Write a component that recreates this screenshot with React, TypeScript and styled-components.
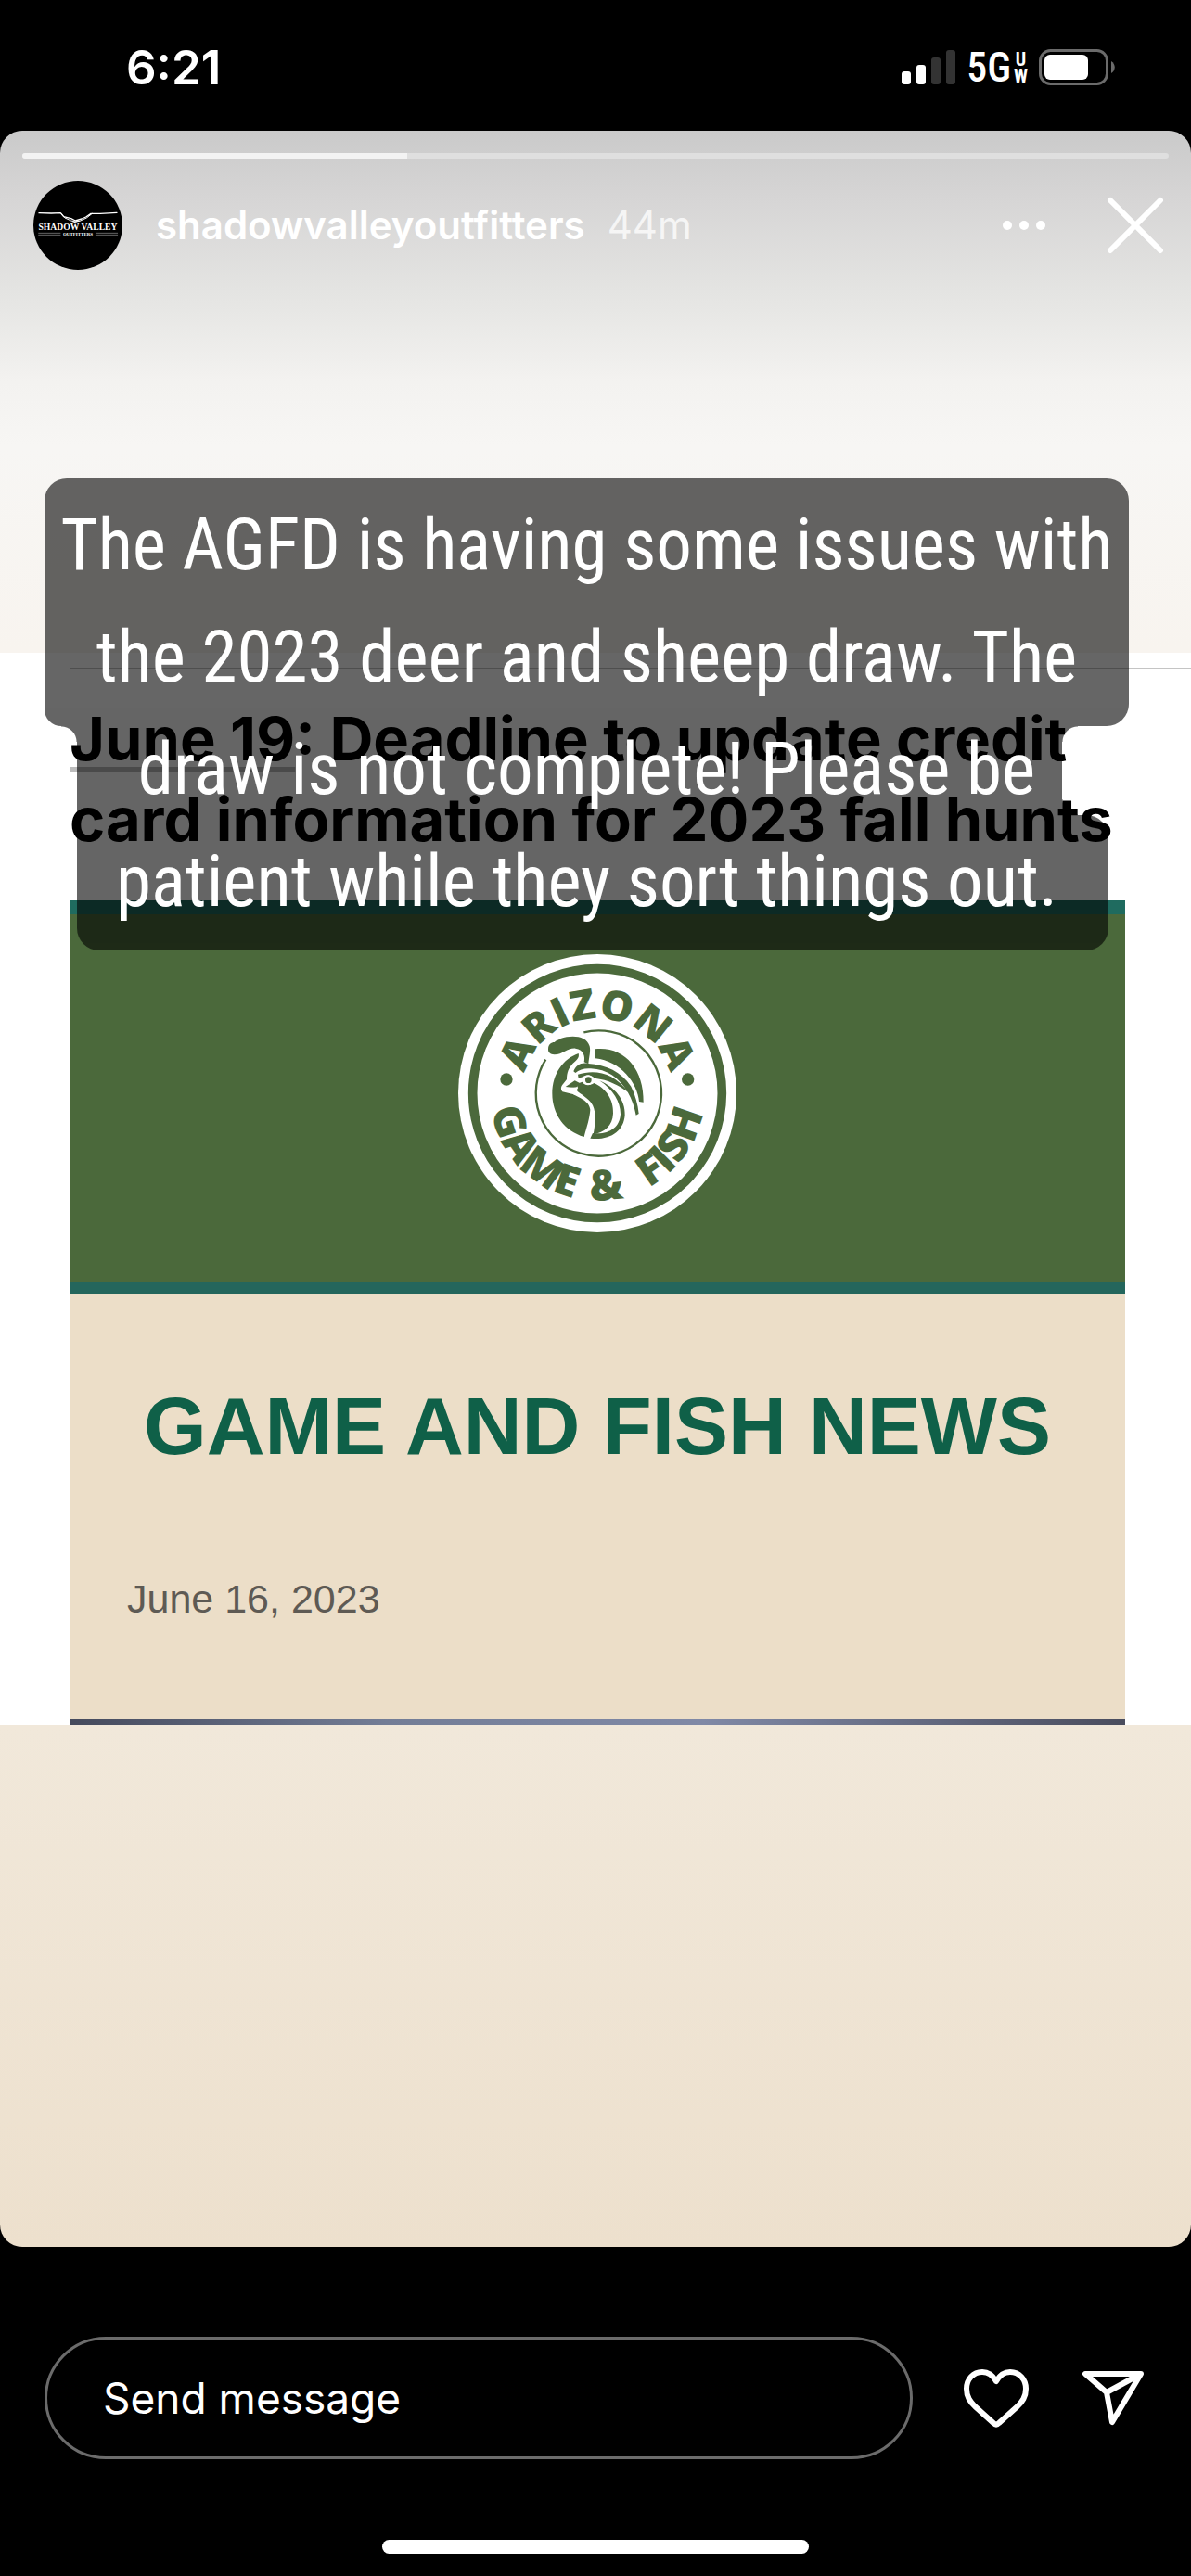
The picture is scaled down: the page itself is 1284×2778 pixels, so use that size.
import React from "react";
import styled, { createGlobalStyle } from "styled-components";

const GlobalStyle = createGlobalStyle`
  * { box-sizing: border-box; }
  html, body { margin: 0; padding: 0; background: #000; }
  button, input { font: inherit; color: inherit; }
  svg { display: block; }
`;

const Page = styled.div`
  display: flex;
  flex-direction: column;
  min-height: 100vh;
  background: #000;
  color: #fff;
  font-family: Inter, "Liberation Sans", sans-serif;
`;

const StatusBar = styled.header`
  display: flex;
  align-items: center;
  justify-content: space-between;
  height: 141px;
  padding: 4px 82px 0 136px;
`;

const Clock = styled.time`
  font-size: 51px;
  line-height: 60px;
  font-weight: 600;
`;

const StatusIcons = styled.div`
  display: flex;
  align-items: center;
  gap: 12px;
`;

const Network = styled.div`
  display: flex;
  align-items: center;
  gap: 3px;
  font-family: "Roboto Condensed", Roboto, sans-serif;
  font-size: 44px;
  line-height: 44px;
  font-weight: 500;
`;

const NetworkKind = styled.span`
  display: flex;
  flex-direction: column;
  align-items: center;
  font-size: 20px;
  line-height: 18px;
  font-weight: 700;
`;

const Story = styled.main`
  position: relative;
  display: flex;
  flex-direction: column;
  padding-bottom: 563px;
  border-radius: 24px;
  overflow: hidden;
  background: linear-gradient(
    #cacaca 0,
    #d6d5d5 72px,
    #e5e5e3 180px,
    #f3f2f0 270px,
    #f7f6f4 340px,
    #f8f4ef 560px,
    #f1e8da 1720px,
    #ede0cd 100%
  );
`;

const Progress = styled.div`
  height: 6px;
  margin: 24px 24px 0;
  border-radius: 3px;
  background: #dfdfdf;
  overflow: hidden;
`;

const ProgressFill = styled.div`
  height: 100%;
  background: #f3f3f3;
`;

const StoryHeader = styled.div`
  display: flex;
  align-items: center;
  height: 96px;
  margin: 24px 28px 413px 36px;
`;

const Account = styled.a`
  display: flex;
  align-items: center;
  gap: 36px;
  color: #fff;
  text-decoration: none;
  font-size: 42px;
  line-height: 48px;
  font-weight: 600;
`;

const Age = styled.span`
  flex: 1;
  margin-left: 24px;
  font-size: 42px;
  line-height: 48px;
  color: rgba(255, 255, 255, 0.75);
`;

const IconButton = styled.button`
  display: flex;
  padding: 0;
  border: 0;
  background: none;
  cursor: pointer;
`;

const HeaderActions = styled.div`
  display: flex;
  align-items: center;
  gap: 65px;
`;

const Media = styled.article`
  padding: 16px 71px 0 75px;
  background: #fff;
`;

const Rule = styled.hr`
  height: 1px;
  margin: 0 -71px 32px 0;
  border: 0;
  background: #c4c4c4;
`;

const Headline = styled.h2`
  margin: 0 0 44px;
  color: #000;
  font-size: 65px;
  line-height: 87px;
  font-weight: 700;
  white-space: nowrap;
`;

const Underlined = styled.span`
  text-decoration: underline #bcbcbc 6px;
  text-underline-offset: 7px;
  text-decoration-skip-ink: none;
`;

const Banner = styled.div`
  display: flex;
  justify-content: center;
  padding: 43px 0 53px;
  border-top: 15px solid #1f6b5f;
  border-bottom: 14px solid #24665c;
  background: #4b693b;
`;

const News = styled.section`
  padding: 90px 62px 96px;
  background: #ecdec8;
`;

const NewsTitle = styled.h1`
  margin: 0;
  text-align: center;
  color: #0f6048;
  font-family: "Liberation Sans", Arial, sans-serif;
  font-size: 87px;
  line-height: 104px;
  font-weight: 700;
  white-space: nowrap;
`;

const NewsDate = styled.p`
  margin: 100px 0 0;
  color: #5e5a54;
  font-family: "Liberation Sans", Arial, sans-serif;
  font-size: 43px;
  line-height: 68px;
`;

const PhotoEdge = styled.div`
  height: 6px;
  background: linear-gradient(90deg, #454a5c, #737d96 30%, #8089a6 60%, #4a4d5e);
`;

/* Sticker text that the poster laid over the shared picture. */
const Sticker = styled.div`
  position: absolute;
  top: 375px;
  left: 48px;
  right: 67px;
`;

const StickerShape = styled.div`
  position: absolute;
  inset: 0;
  display: flex;
  flex-direction: column;
  opacity: 0.6;
`;

const WideBand = styled.div`
  height: 267px;
  border-radius: 24px 24px 24px 18px;
  background: #000;
`;

const NarrowBand = styled.div`
  position: relative;
  height: 96px;
  margin: 0 72px 0 35px;
  background: #000;
`;

const Fillet = styled.i<{ $side: "left" | "right"; $edge: "top" | "bottom" }>`
  position: absolute;
  ${(p) => p.$edge}: 0;
  ${(p) => p.$side}: -17px;
  width: 17px;
  height: 17px;
  background: radial-gradient(
    circle at ${(p) => p.$side} ${(p) => (p.$edge === "top" ? "bottom" : "top")},
    transparent 16px,
    #000 17px
  );
`;

const LastBand = styled.div`
  flex: 1;
  margin: 0 22px 0 35px;
  border-radius: 0 24px 24px 24px;
  background: #000;
`;

const StickerText = styled.p`
  position: relative;
  margin: 0;
  padding: 12px 0 13px;
  text-align: center;
  font-family: "Roboto Condensed", "Liberation Sans Narrow", sans-serif;
  font-size: 77px;
  line-height: 121px;
  white-space: nowrap;
`;

const Line = styled.span`
  display: block;
`;

const ReplyBar = styled.form`
  display: flex;
  align-items: center;
  margin: 97px 50px 0 48px;
`;

const ReplyInput = styled.input`
  flex: 1;
  min-width: 0;
  height: 132px;
  padding: 0 60px;
  border: 3px solid #6b6b6b;
  border-radius: 66px;
  outline: 0;
  background: #000;
  font-size: 46px;
  &::placeholder {
    color: #fff;
    opacity: 1;
  }
`;

const ReplyActions = styled.div`
  display: flex;
  align-items: center;
  gap: 56px;
  margin-left: 54px;
`;

const HomeIndicator = styled.div`
  width: 460px;
  height: 15px;
  margin: auto auto 24px;
  border-radius: 8px;
  background: #fff;
`;

const SignalIcon = () => (
  <svg width="58" height="38" viewBox="0 0 58 38" fill="#fff">
    <rect x="0" y="23" width="10" height="14" rx="3" />
    <rect x="16" y="16" width="10" height="21" rx="3" />
    <rect x="32" y="8" width="10" height="29" rx="3" fill="#333" />
    <rect x="48" y="0" width="10" height="37" rx="3" fill="#333" />
  </svg>
);

const BatteryIcon = () => (
  <svg width="82" height="39" viewBox="0 0 82 39">
    <rect x="1.5" y="1.5" width="72" height="36" rx="11" fill="none" stroke="#6b6b6b" strokeWidth="3" />
    <rect x="6" y="6" width="47" height="27" rx="6" fill="#fff" />
    <path d="M78 13c5 3 5 10 0 13z" fill="#6b6b6b" />
  </svg>
);

const Avatar = () => (
  <svg width="96" height="96" viewBox="0 0 288 288" aria-label="Shadow Valley Outfitters">
    <circle cx="144" cy="144" r="144" fill="#000" />
    <g fill="none" stroke="#fff" strokeLinecap="round" strokeLinejoin="round">
      <path d="M18 104l40 1 30-1 10 12 24 6 14 7 20-6 14-6 16-11 30 0 54-3" strokeWidth="4" />
      <path d="M90 106l12 14 20 9 14 3 14-2 22-10 18-14M126 136l16-5" strokeWidth="3" />
      <path d="M17 169h70M202 169h70M17 175h70M202 175h70" stroke="#999" strokeWidth="2" />
    </g>
    <g fill="#fff" textAnchor="middle" fontFamily="Liberation Serif, serif">
      <text x="144" y="160" fontSize="29">SHADOW VALLEY</text>
      <text x="144" y="177" fontSize="15">OUTFITTERS</text>
    </g>
  </svg>
);

const MoreIcon = () => (
  <svg width="46" height="10" viewBox="0 0 46 10" fill="#fff">
    <circle cx="5" cy="5" r="5" />
    <circle cx="23" cy="5" r="5" />
    <circle cx="41" cy="5" r="5" />
  </svg>
);

const CloseIcon = () => (
  <svg width="64" height="64" viewBox="0 0 64 64">
    <path d="M5 5l54 54M59 5L5 59" stroke="#fff" strokeWidth="6" strokeLinecap="round" />
  </svg>
);

const HeartIcon = () => (
  <svg width="72" height="64" viewBox="0 0 72 64" fill="none" stroke="#fff" strokeWidth="6" strokeLinejoin="round">
    <path d="M36 14C32 7 27 4 21 4 11 4 4 12 4 22c0 9 4 14 9 19l20 18q3 3 6 0l20-18c5-5 9-10 9-19C68 12 61 4 51 4c-6 0-11 3-15 10z" />
  </svg>
);

const ShareIcon = () => (
  <svg width="68" height="64" viewBox="0 0 68 64" fill="none" stroke="#fff" strokeWidth="6" strokeLinejoin="round">
    <path d="M4 6H64L33 58 27 26z" />
    <path d="M27 26L64 6" />
  </svg>
);

const GameAndFishSeal = () => (
  <svg width="300" height="300" viewBox="71 57 900 900" aria-label="Arizona Game &amp; Fish">
    <defs>
      <path id="seal-top" d="M279 507a242 242 0 0 1 484 0" />
      <path id="seal-bottom" d="M174 507a347 347 0 0 0 694 0" />
    </defs>
    <circle cx="521" cy="507" r="450" fill="#fff" />
    <circle cx="521" cy="507" r="403" fill="none" stroke="#4b693b" strokeWidth="29" />
    <g fill="#4b693b" fontFamily="Open Sans, Noto Sans, sans-serif" fontWeight="800" textAnchor="middle">
      <text fontSize="134"><textPath href="#seal-top" startOffset="50%">ARIZONA</textPath></text>
      <text fontSize="138"><textPath href="#seal-bottom" startOffset="24%">GAME</textPath></text>
      <text fontSize="138"><textPath href="#seal-bottom" startOffset="53%">&amp;</textPath></text>
      <text fontSize="138"><textPath href="#seal-bottom" startOffset="80%">FISH</textPath></text>
    </g>
    <circle cx="227" cy="462" r="20" fill="#4b693b" />
    <circle cx="814" cy="462" r="20" fill="#4b693b" />
    <path d="M477 310A203 203 0 1 1 354 398" fill="none" stroke="#4b693b" strokeWidth="7" />
    {/* Quail head facing left */}
    <g transform="translate(270 270)" fill="#4b693b">
      <path d="M190 108C140 125 105 175 105 238c0 67 40 122 103 140 7-28 18-58 20-88-2-28-38-40-56-50l-34-8c-8-10-3-20 4-27l10-13c0-22 6-37 20-52 12-10 22-18 18-32z" />
      <path d="M92 95c0-17 10-23 20-23 8-8 14-6 20-12 36-12 84-10 94 25 4 15-2 35-4 57l-14-6c4-16 0-41-28-44-25-2-40 20-68 20-14-2-20-7-20-17z" />
      <path d="M244 94c92-10 158 62 156 172l-14-2c-4-58-60-132-142-140z" />
      <path d="M174 166c8-22 26-30 48-25 58 4 106 26 138 74 14 28 22 58 25 88l-9 5c-6-30-14-52-26-73-30-50-68-76-120-78-20-2-38 4-50 14z" />
      <path d="M188 176c56-18 118-6 164 58-34-24-64-40-110-46-12-12-28-12-38-4l-14 4z" />
      <path d="M186 206l16-6c6 12 24 14 38 4 36 16 64 50 62 98-2 42-28 60-64 68 6-30 10-70-2-94-8-18-26-28-50-46z" />
      <path d="M258 196c50 22 84 62 82 112-4 52-48 82-112 75l8-17c50 6 88-16 90-62 0-40-24-78-68-108z" />
      <path d="M148 216l30-20 16 8-12 16z" />
    </g>
    <path d="M424 492l34-3" stroke="#fff" strokeWidth="4" />
    <circle cx="492" cy="464" r="13" fill="#4b693b" stroke="#fff" strokeWidth="6" />
  </svg>
);

export default function App() {
  return (
    <Page>
      <GlobalStyle />
      <StatusBar>
        <Clock>6:21</Clock>
        <StatusIcons>
          <SignalIcon />
          <Network>
            5G
            <NetworkKind>
              <span>U</span>
              <span>W</span>
            </NetworkKind>
          </Network>
          <BatteryIcon />
        </StatusIcons>
      </StatusBar>

      <Story>
        <Progress>
          <ProgressFill style={{ width: `${(415 / 1236) * 100}%` }} />
        </Progress>
        <StoryHeader>
          <Account href="#shadowvalleyoutfitters">
            <Avatar />
            shadowvalleyoutfitters
          </Account>
          <Age>44m</Age>
          <HeaderActions>
            <IconButton type="button" aria-label="More options"><MoreIcon /></IconButton>
            <IconButton type="button" aria-label="Close story"><CloseIcon /></IconButton>
          </HeaderActions>
        </StoryHeader>

        <Media>
          <Rule />
          <Headline>
            <Underlined>June 19</Underlined>: Deadline to update credit
            <br />
            card information for 2023 fall hunts
          </Headline>
          <Banner>
            <GameAndFishSeal />
          </Banner>
          <News>
            <NewsTitle>GAME AND FISH NEWS</NewsTitle>
            <NewsDate>June 16, 2023</NewsDate>
          </News>
          <PhotoEdge />
        </Media>

        <Sticker>
          <StickerShape>
            <WideBand />
            <NarrowBand>
              <Fillet $side="left" $edge="top" />
              <Fillet $side="right" $edge="top" />
              <Fillet $side="right" $edge="bottom" />
            </NarrowBand>
            <LastBand />
          </StickerShape>
          <StickerText>
            <Line>The AGFD is having some issues with</Line>
            <Line>the 2023 deer and sheep draw. The</Line>
            <Line>draw is not complete! Please be</Line>
            <Line>patient while they sort things out.</Line>
          </StickerText>
        </Sticker>
      </Story>

      <ReplyBar onSubmit={(e) => e.preventDefault()}>
        <ReplyInput type="text" aria-label="Send message" placeholder="Send message" />
        <ReplyActions>
          <IconButton type="button" aria-label="Like"><HeartIcon /></IconButton>
          <IconButton type="button" aria-label="Share"><ShareIcon /></IconButton>
        </ReplyActions>
      </ReplyBar>
      <HomeIndicator />
    </Page>
  );
}
